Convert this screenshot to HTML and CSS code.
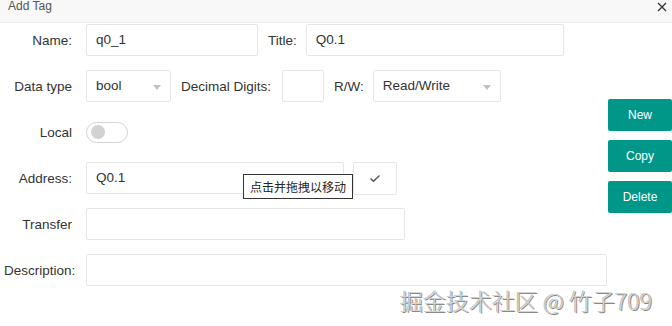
FILE: index.html
```html
<!DOCTYPE html>
<html lang="en">
<head>
<meta charset="utf-8">
<title>Add Tag</title>
<link rel="stylesheet" href="styles.css">
</head>
<body>
<div class="dialog">
  <div class="hd">
    <span class="hd-title">Add Tag</span>
    <svg class="close" width="10" height="10" viewBox="0 0 10 10"><path d="M1 1L9 9M9 1L1 9" stroke="#333" stroke-width="1.3" fill="none"/></svg>
  </div>
  <div class="bd">
    <div class="form">
      <div class="row">
        <label class="lbl">Name:</label>
        <div class="input w-name">q0_1</div>
        <label class="lbl-inline">Title:</label>
        <div class="input w-title">Q0.1</div>
      </div>
      <div class="row">
        <label class="lbl">Data type</label>
        <div class="input select w-type">bool<span class="caret"></span></div>
        <label class="lbl-inline">Decimal Digits:</label>
        <div class="input w-dec"></div>
        <label class="lbl-inline">R/W:</label>
        <div class="input select w-rw">Read/Write<span class="caret"></span></div>
      </div>
      <div class="row">
        <label class="lbl">Local</label>
        <div class="switch"><span class="knob"></span></div>
      </div>
      <div class="row">
        <label class="lbl">Address:</label>
        <div class="input w-addr">Q0.1</div>
        <div class="check-btn">
          <svg width="12" height="9" viewBox="0 0 12 9"><path d="M1.5 4.5L4.5 7.2L10.5 1.5" stroke="#555" stroke-width="1.4" fill="none"/></svg>
        </div>
      </div>
      <div class="row">
        <label class="lbl">Transfer</label>
        <div class="input w-transfer"></div>
      </div>
      <div class="row">
        <label class="lbl">Description:</label>
        <div class="input w-desc"></div>
      </div>
    </div>
    <div class="actions">
      <button class="btn">New</button>
      <button class="btn">Copy</button>
      <button class="btn">Delete</button>
    </div>
  </div>
  <div class="tooltip">点击并拖拽以移动</div>
  <div class="watermark">掘金技术社区 @ 竹子709</div>
</div>
</body>
</html>
```
FILE: styles.css
```css
* { box-sizing: border-box; }
html, body {
  margin: 0;
  padding: 0;
  background: #fff;
}
body {
  width: 672px;
  height: 326px;
  overflow: hidden;
  font-family: "Liberation Sans", Arial, sans-serif;
  color: #333;
}
.dialog {
  position: relative;
  width: 672px;
  height: 326px;
}
.hd {
  height: 23px;
  background: #f8f8f8;
  border-bottom: 1px solid #eeeeee;
  display: flex;
  align-items: flex-start;
  justify-content: space-between;
  padding: 0 5px 0 8px;
}
.hd-title {
  font-size: 12px;
  line-height: 13px;
  color: #555;
}
.close { display: block; margin-top: 2px; }
.bd {
  display: flex;
}
.form {
  width: 608px;
  padding-top: 1px;
  display: flex;
  flex-direction: column;
  gap: 14px;
}
.row {
  display: flex;
  align-items: center;
  height: 32px;
}
.lbl {
  width: 72px;
  padding-left: 4px;
  margin-right: 14px;
  text-align: right;
  white-space: nowrap;
  font-size: 13.5px;
  flex: none;
}
.lbl-inline {
  font-size: 13.5px;
  white-space: nowrap;
  margin: 0 10px;
}
.input {
  height: 32px;
  border: 1px solid #e6e6e6;
  border-radius: 2px;
  background: #fff;
  padding: 0 9px;
  font-size: 13.5px;
  line-height: 30px;
  color: #333;
  position: relative;
  flex: none;
}
.w-name { width: 172px; }
.w-title { width: 258px; margin-left: -1px; }
.w-type { width: 85px; }
.w-dec { width: 42px; margin-left: 1px; }
.w-rw { width: 128px; margin-left: -1px; }
.w-addr { width: 258px; }
.w-transfer { width: 319px; }
.w-desc { width: 521px; }
.caret {
  position: absolute;
  right: 9px;
  top: 14px;
  width: 0;
  height: 0;
  border-top: 5px solid #c2c2c2;
  border-left: 4.5px solid transparent;
  border-right: 4.5px solid transparent;
}
.switch {
  position: relative;
  width: 42px;
  height: 21px;
  border: 1px solid #d2d2d2;
  border-radius: 11px;
  background: #fff;
}
.knob {
  position: absolute;
  left: 4px;
  top: 2.5px;
  width: 14px;
  height: 14px;
  border-radius: 50%;
  background: #d2d2d2;
}
.check-btn {
  width: 44px;
  height: 33px;
  margin-left: 9px;
  border: 1px solid #e6e6e6;
  border-radius: 2px;
  display: flex;
  align-items: center;
  justify-content: center;
}
.actions {
  width: 64px;
  padding-top: 76px;
  display: flex;
  flex-direction: column;
  gap: 9px;
}
.btn {
  width: 64px;
  height: 32px;
  border: 0;
  border-radius: 2px;
  background: #009688;
  color: #fff;
  font-family: "Liberation Sans", Arial, sans-serif;
  font-size: 12px;
  padding: 0;
}
.tooltip {
  position: absolute;
  left: 243px;
  top: 174px;
  height: 25px;
  padding: 0 6px;
  border: 1px solid #333;
  background: #fff;
  font-family: "Noto Sans CJK SC", sans-serif;
  font-size: 12px;
  line-height: 23px;
  color: #222;
  white-space: nowrap;
}
.watermark {
  position: absolute;
  left: 400px;
  top: 284px;
  font-family: "Noto Sans CJK SC", sans-serif;
  font-weight: 300;
  font-size: 23px;
  line-height: 32px;
  color: #d4d4d4;
  text-shadow: 1px 1px 0 #8a8a8a, -0.5px -0.5px 0 #aaa;
  white-space: nowrap;
}
```
